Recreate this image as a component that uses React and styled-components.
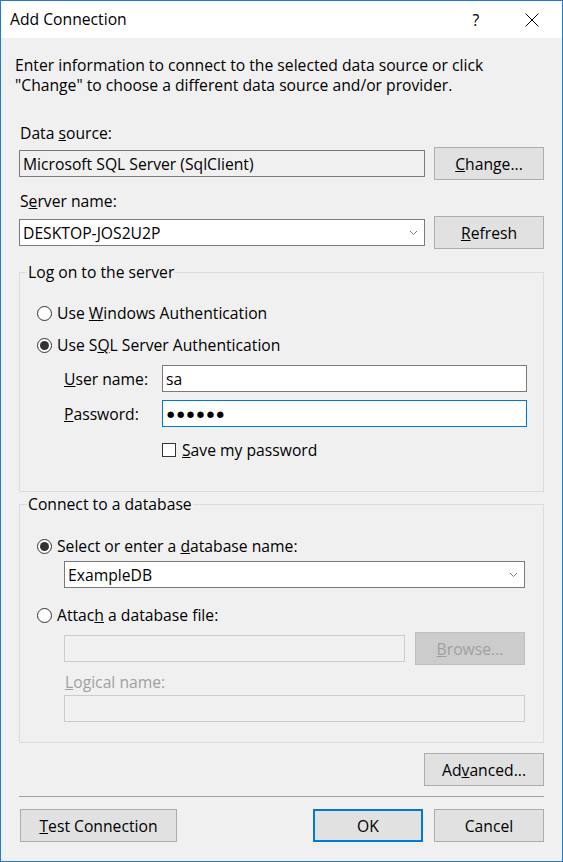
import React from 'react'
import styled, { createGlobalStyle, css } from 'styled-components'

const GlobalStyle = createGlobalStyle`
    html, body {
        margin: 0;
        padding: 0;
        background: #ffffff;
    }
`

function Radio({ checked, children }) {
    return (
        <RadioRow>
            <RadioCircle>{checked && <RadioDot />}</RadioCircle>
            <span>{children}</span>
        </RadioRow>
    )
}

function Chevron() {
    return (
        <ChevronIcon width="9" height="6" viewBox="0 0 9 6">
            <path d="M1 1 L4.5 4.5 L8 1" fill="none" stroke="#7a7a7a" strokeWidth="1" />
        </ChevronIcon>
    )
}

function App() {
    return (
        <>
            <GlobalStyle />
            <Window>
                <TitleBar>
                    <Title>Add Connection</Title>
                    <HelpGlyph>?</HelpGlyph>
                    <CloseGlyph width="14" height="14" viewBox="0 0 14 14">
                        <path d="M0.5 0.5 L13.5 13.5 M13.5 0.5 L0.5 13.5" stroke="#000" strokeWidth="1" />
                    </CloseGlyph>
                </TitleBar>

                <Body>
                    <Intro>
                        Enter information to connect to the selected data source or click
                        <br />
                        "Change" to choose a different data source and/or provider.
                    </Intro>

                    <FieldLabel $top={28}>Data <u>s</u>ource:</FieldLabel>
                    <Row $top={4}>
                        <TextBox $readonly>Microsoft SQL Server (SqlClient)</TextBox>
                        <Button $width={110}><u>C</u>hange...</Button>
                    </Row>

                    <FieldLabel $top={11}>S<u>e</u>rver name:</FieldLabel>
                    <Row $top={5}>
                        <TextBox>
                            DESKTOP-JOS2U2P
                            <Chevron />
                        </TextBox>
                        <Button $width={110}><u>R</u>efresh</Button>
                    </Row>

                    <Group $top={13} $pad="21px 0 31px">
                        <Legend>Log on to the server</Legend>
                        <Radio>Use <u>W</u>indows Authentication</Radio>
                        <Spacer $h={12} />
                        <Radio checked>Use S<u>Q</u>L Server Authentication</Radio>
                        <CredGrid>
                            <span><u>U</u>ser name:</span>
                            <TextBox>sa</TextBox>
                            <span><u>P</u>assword:</span>
                            <TextBox $focused><Dots>●●●●●●</Dots></TextBox>
                        </CredGrid>
                        <CheckRow>
                            <CheckBox />
                            <span><u>S</u>ave my password</span>
                        </CheckRow>
                    </Group>

                    <Group $top={2} $pad="22px 0 20px">
                        <Legend>Connect to a database</Legend>
                        <Radio checked>Select or enter a <u>d</u>atabase name:</Radio>
                        <Indent $top={5}>
                            <TextBox>
                                ExampleDB
                                <Chevron />
                            </TextBox>
                        </Indent>
                        <Spacer $h={17} />
                        <Radio>Attac<u>h</u> a database file:</Radio>
                        <Indent $top={7}>
                            <Row $top={0} $gap={10}>
                                <TextBox $disabled />
                                <Button $width={110} $disabled><u>B</u>rowse...</Button>
                            </Row>
                            <FieldLabel $top={7} $disabled><u>L</u>ogical name:</FieldLabel>
                            <TextBox $disabled $top={3} />
                        </Indent>
                    </Group>

                    <ButtonBar $top={10}>
                        <Button $width={120}>Ad<u>v</u>anced...</Button>
                    </ButtonBar>

                    <Separator />

                    <ButtonBar $top={12}>
                        <Button $width={157} $push><u>T</u>est Connection</Button>
                        <Button $width={110} $primary>OK</Button>
                        <Button $width={110}>Cancel</Button>
                    </ButtonBar>
                </Body>
            </Window>
        </>
    )
}

export default App

const Window = styled.div`
    width: 563px;
    height: 862px;
    box-sizing: border-box;
    border: 1px solid #1f7bcf;
    display: flex;
    flex-direction: column;
    font-family: "Segoe UI", "Open Sans", "Noto Sans", sans-serif;
    font-size: 15.7px;
    color: #000;
    overflow: hidden;
`

const TitleBar = styled.div`
    height: 37px;
    flex-shrink: 0;
    background: #ffffff;
    display: flex;
    align-items: center;
    padding-left: 9px;
`

const Title = styled.span`
    flex: 1;
    margin-top: -1px;
`

const HelpGlyph = styled.span`
    width: 20px;
    text-align: center;
    margin-right: 39px;
`

const CloseGlyph = styled.svg`
    margin-right: 23px;
`

const Body = styled.div`
    flex: 1;
    background: #f0f0f0;
    padding: 17px 18px 0;
    display: flex;
    flex-direction: column;
    line-height: 20px;
`

const Intro = styled.div`
    margin-left: -4px;
`

const FieldLabel = styled.div`
    margin-top: ${p => p.$top}px;
    padding-left: 1px;
    color: ${p => (p.$disabled ? '#a0a0a0' : '#000')};
`

const Row = styled.div`
    display: flex;
    align-items: center;
    gap: ${p => p.$gap ?? 9}px;
    margin-top: ${p => p.$top}px;
`

const TextBox = styled.div`
    flex: 1 1 auto;
    min-width: 0;
    height: 27px;
    box-sizing: border-box;
    margin-top: ${p => p.$top ?? 0}px;
    border: 1px solid #7a7a7a;
    background: #ffffff;
    padding: 0 4px 0 3px;
    display: flex;
    align-items: center;
    justify-content: space-between;
    white-space: nowrap;

    ${p => p.$readonly && css`
        background: #f0f0f0;
    `}
    ${p => p.$focused && css`
        border-color: #0078d7;
    `}
    ${p => p.$disabled && css`
        background: #f0f0f0;
        border-color: #cccccc;
    `}
`

const ChevronIcon = styled.svg`
    margin-right: 2px;
    flex-shrink: 0;
`

const Dots = styled.span`
    font-family: "DejaVu Sans", sans-serif;
    font-size: 8.5px;
    letter-spacing: 2.5px;
    padding-left: 1px;
`

const Button = styled.button`
    width: ${p => p.$width}px;
    height: 33px;
    flex-shrink: 0;
    box-sizing: border-box;
    background: #e1e1e1;
    border: 1px solid #adadad;
    border-radius: 0;
    padding: 0;
    font: inherit;
    color: #000;
    margin-right: ${p => (p.$push ? 'auto' : '0')};
    margin-left: ${p => (p.$push ? '1px' : '0')};

    ${p => p.$primary && css`
        border: 2px solid #0078d7;
    `}
    ${p => p.$disabled && css`
        background: #cccccc;
        border-color: #bfbfbf;
        color: #a0a0a0;
    `}
`

const Group = styled.fieldset`
    margin: ${p => p.$top}px 0 0;
    padding: ${p => p.$pad};
    border: 1px solid #dcdcdc;
    min-width: 0;
    display: flex;
    flex-direction: column;
`

const Legend = styled.legend`
    margin-left: 7px;
    padding: 0 1px;
    line-height: 20px;
`

const RadioRow = styled.div`
    display: flex;
    align-items: center;
    height: 20px;
    margin-left: 17px;
    gap: 5px;
`

const RadioCircle = styled.span`
    width: 15px;
    height: 15px;
    box-sizing: border-box;
    border: 1px solid #333333;
    border-radius: 50%;
    background: #ffffff;
    display: flex;
    align-items: center;
    justify-content: center;
`

const RadioDot = styled.span`
    width: 9px;
    height: 9px;
    border-radius: 50%;
    background: #333333;
`

const Spacer = styled.div`
    height: ${p => p.$h}px;
`

const CredGrid = styled.div`
    display: grid;
    grid-template-columns: 98px 1fr;
    row-gap: 8px;
    align-items: center;
    margin: 10px 16px 0 44px;
`

const CheckRow = styled.div`
    display: flex;
    align-items: center;
    gap: 6px;
    height: 20px;
    margin: 13px 0 0 142px;
`

const CheckBox = styled.span`
    width: 14px;
    height: 14px;
    box-sizing: border-box;
    border: 1px solid #333333;
    background: #ffffff;
`

const Indent = styled.div`
    margin: ${p => p.$top}px 18px 0 44px;
    display: flex;
    flex-direction: column;
`

const ButtonBar = styled.div`
    display: flex;
    justify-content: flex-end;
    gap: 11px;
    margin-top: ${p => p.$top}px;
`

const Separator = styled.div`
    margin-top: 10px;
    border-top: 1px solid #a0a0a0;
`
